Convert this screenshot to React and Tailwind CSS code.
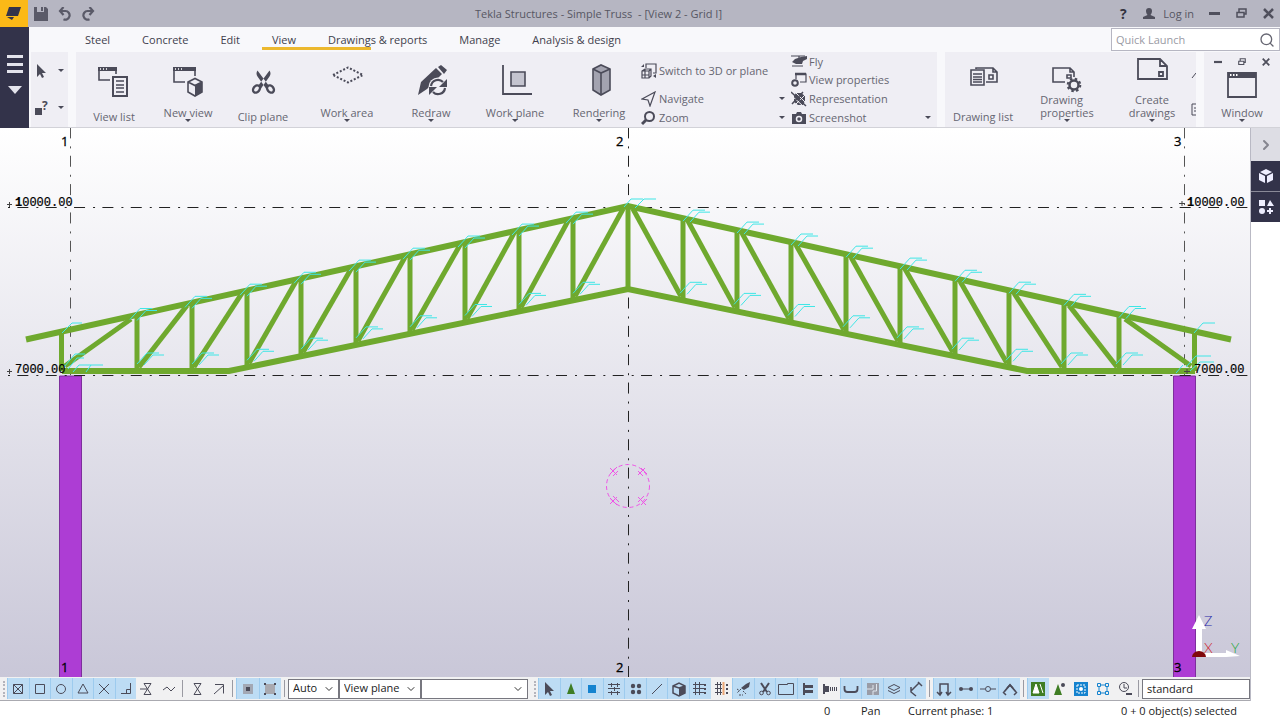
import { Search, ChevronRight, ChevronDown } from 'lucide-react';
import clsx from 'clsx';

const tabs = ['Steel', 'Concrete', 'Edit', 'View', 'Drawings & reports', 'Manage', 'Analysis & design'];

export default function App() {
    return (
        <div className="min-h-screen flex flex-col bg-white text-[11px] text-[#4a4a58] font-['Open_Sans','Noto_Sans',sans-serif]">
            <TitleBar />
            <div className="flex">
                <nav className="w-[29px] shrink-0 bg-[#33334a] flex flex-col items-center">
                    <button aria-label="File menu" className="mt-7">
                        <svg viewBox="0 0 16 40" className="w-4 h-10" fill="#e4e4ec">
                            <path d="M0 0h16v3H0zM0 8h16v3H0zM0 15h16v3H0zM1 31h14l-7 8z" />
                        </svg>
                    </button>
                </nav>
                <div className="flex-1 min-w-0 bg-[#f8f8fb] border-b border-[#d2d2d8]">
                    <Tabs />
                    <Ribbon />
                </div>
            </div>
            <div className="flex">
                <div className="flex-1 min-w-0">
                    <ModelView />
                    <BottomToolbar />
                </div>
                <SidePanel />
            </div>
            <StatusBar />
        </div>
    );
}

function TitleBar() {
    return (
        <header className="h-[27px] flex items-center bg-[#b6b6c2] text-[#565662]">
            <div className="w-[97px] h-full flex items-center">
                <div className="w-[29px] h-full bg-[#fbb917] flex items-center justify-center">
                    <svg viewBox="0 0 16 16" className="w-4 h-4" fill="#33334a">
                        <path d="M3 1h12l-3 9H0zM1 11h7l-2 3z" />
                    </svg>
                </div>
                <button aria-label="Save" className="ml-1.5 w-4">
                    <svg viewBox="0 0 14 14" className="w-[14px] h-[14px]" fill="#5a5a68">
                        <path d="M0 0h3v5h7V0h2l2 2v12H0zM7 0h2v4H7z" />
                    </svg>
                </button>
                <button aria-label="Undo" className="ml-2 w-4">
                    <svg viewBox="0 0 14 14" className="w-[14px] h-[14px]" fill="none" stroke="#5a5a68" strokeWidth="2.2">
                        <path d="M2 4h5.500a4.300 4.300 0 1 1-2 8.200" />
                        <path d="M5.500 0L2 4l3.500 4" />
                    </svg>
                </button>
                <button aria-label="Redo" className="ml-2 w-4">
                    <svg viewBox="0 0 14 14" className="w-[14px] h-[14px]" fill="none" stroke="#5a5a68" strokeWidth="2.2">
                        <path d="M12 4H6.500a4.300 4.300 0 1 0 2 8.200" />
                        <path d="M8.500 0L12 4 8.500 8" />
                    </svg>
                </button>
            </div>
            <h1 className="flex-1 pt-px text-center whitespace-pre">{'Tekla Structures - Simple Truss  - [View 2 - Grid I]'}</h1>
            <div className="w-[180px] h-full flex items-center justify-end">
                <button className="w-4 font-bold text-sm text-[#33333f]">?</button>
                <button className="ml-3 flex items-center gap-2">
                    <svg viewBox="0 0 12 12" className="w-3 h-3" fill="#4f4f5c">
                        <path d="M6 0a3 3 0 0 1 3 3c0 2-1 3-1.5 4L12 9v2H0V9l4.5-2C4 6 3 5 3 3a3 3 0 0 1 3-3z" />
                    </svg>
                    <span className="pt-px">Log in</span>
                </button>
                <div className="flex items-center gap-4 ml-[15px] mr-1.5">
                    <WindowButtons />
                </div>
            </div>
        </header>
    );
}

function WindowButtons({ small }) {
    const size = small ? 'w-2 h-2' : 'w-[11px] h-[11px]';
    return (
        <>
            <button aria-label="Minimize">
                <svg viewBox="0 0 11 11" className={size} fill="#4f4f5c"><path d="M0 4h11v3H0z" /></svg>
            </button>
            <button aria-label="Restore">
                <svg viewBox="0 0 11 11" className={size} fill="none" stroke="#4f4f5c" strokeWidth="1.5">
                    <path d="M3 4V1h7v5H8M1 4.5h7V9H1z" />
                </svg>
            </button>
            <button aria-label="Close">
                <svg viewBox="0 0 11 11" className={size} fill="none" stroke="#4f4f5c" strokeWidth="2.5">
                    <path d="M1 1l9 9M10 1l-9 9" />
                </svg>
            </button>
        </>
    );
}

function Tabs() {
    return (
        <div className="h-[25px] flex items-center justify-between">
            <div className="flex items-center gap-8 pl-14">
                {tabs.map((tab) => (
                    <button key={tab} className="relative h-[25px] pt-0.5 whitespace-nowrap text-[#3f3f4d]">
                        {/* Marker sliding towards the next tab */}
                        {tab === 'View' && <span className="absolute -left-2.5 bottom-0.5 w-[109px] h-[3px] bg-[#ecb82e]" />}
                        {tab}
                    </button>
                ))}
            </div>
            <label className="w-[169px] h-[23px] flex items-center bg-white border border-[#b6b6c2] px-1">
                <input
                    type="text"
                    placeholder="Quick Launch"
                    aria-label="Quick Launch"
                    className="flex-1 min-w-0 pt-px outline-none placeholder:text-[#9a9aa4]"
                />
                <Search className="w-4 h-4 text-[#666672]" />
            </label>
        </div>
    );
}

function Caret() {
    return <svg viewBox="0 0 6 4" className="w-1.5 h-1 shrink-0" fill="#4a4a58"><path d="M0 0h6L3 3z" /></svg>;
}

function BigButton({ label, icon, caret, className }) {
    return (
        <button className={clsx('h-full pt-[5px] pb-1 flex flex-col items-center justify-between', className)}>
            <svg viewBox="0 0 40 36" className="w-10 h-9 overflow-visible" fill="none" stroke="#4b4b59" strokeWidth="1.6">{icon}</svg>
            <span className="flex flex-col items-center">
                <span className="leading-[13px] text-[#666672]">{label}</span>
                {caret && <Caret />}
            </span>
        </button>
    );
}

function SmallButton({ label, icon, caret, className }) {
    return (
        <button className={clsx('flex items-center gap-0.5 pr-1.5 text-[#666672] whitespace-nowrap', className)}>
            <svg viewBox="0 0 16 16" className="w-4 h-4" fill="none" stroke="#4b4b59" strokeWidth="1.2">{icon}</svg>
            <span className="flex-1 pt-px text-left">{label}</span>
            {caret && <Caret />}
        </button>
    );
}

const dark = { fill: '#4b4b59', stroke: 'none' };

const icons = {
    viewList: (
        <>
            <path d="M16 23H5V11h17v6" />
            <path {...dark} d="M4 10h19v4H4z" />
            <path d="M6 12h1M9 12h1M12 12h1" stroke="#fff" />
            <path d="M19 20h14v19H19z" strokeWidth="2" />
            <path d="M22 24h8M22 28h8M22 31h8M22 35h8" />
        </>
    ),
    newView: (
        <>
            <path d="M17 25H6V11h21v8" />
            <path {...dark} d="M5 10h23v4H5z" />
            <path d="M7 12h1M10 12h1M13 12h1" stroke="#fff" />
            <path d="M20 25l7-3.5 7 3.5v10l-7 4-7-4zM20 25l7 3.5 7-3.5" />
            <path {...dark} d="M27 28l7-3v10l-7 4z" />
        </>
    ),
    clip: (
        <>
            <path {...dark} d="M14.500 13.500q-2 3 0 6l8.500 12 3-2.500zM26.500 13.500q2 3 0 6L18 31.500 15 29z" />
            <ellipse cx="13.500" cy="32" rx="3" ry="4" strokeWidth="2.4" transform="rotate(40 13.500 32)" />
            <ellipse cx="27.500" cy="32" rx="3" ry="4" strokeWidth="2.4" transform="rotate(-40 27.500 32)" />
        </>
    ),
    workArea: <path d="M6 18l15-7.5L36 18l-15 7.5z" strokeWidth="2" strokeDasharray="2 1.8" />,
    redraw: (
        <>
            <path {...dark} d="M7 38l3-13L25 11l6 6-15 15zM27 10l3-2 6 5-3 4z" />
            <circle cx="27" cy="30" r="9.5" fill="#efeef4" stroke="none" />
            <path d="M20 29a7 7 0 0 1 12-4M34 31a7 7 0 0 1-12 4" strokeWidth="2.2" />
            <path {...dark} d="M36 22v8h-8zM18 38v-8h8z" />
        </>
    ),
    workPlane: (
        <>
            <path d="M8 8v29h29" strokeWidth="1.8" />
            <path d="M16 15h14v14H16z" fill="#c4c4cf" />
        </>
    ),
    rendering: (
        <>
            <path d="M14 12l8-4 9 4v21l-9 5-8-5z" fill="#a3a3b0" />
            <path d="M14 12l8 4 9-4M22 16v22" />
        </>
    ),
    drawingList: (
        <>
            <path d="M13 12v-1h17l4 4v10H23M30 11v4h4M26 18h4v4h-4z" />
            <path d="M8 13h13v15H8zM10 17h9M10 20h9M10 22.5h9M10 25h9" />
        </>
    ),
    drawingProperties: (
        <>
            <path d="M18 25H6V11h17l4 4v5M23 11v4h4M20 18h4v3h-4z" />
            <circle cx="27" cy="28" r="4.5" strokeWidth="2.5" />
            <circle cx="27" cy="28" r="6.3" strokeWidth="2" strokeDasharray="2.5 2.45" />
        </>
    ),
    createDrawings: <path d="M6 2h22l7 7v13H6zM28 2v7h7M27 15h4v4h-4z" strokeWidth="1.8" />,
    switch3d: (
        <>
            <path d="M5 5V1h10v9h-3" />
            <path d="M1 8l3-2h6v7l-2 2H1zM1 8h7v7M8 8l2-2M1 12h7M4 6v9" />
            <path {...dark} d="M0 4l3-3v3zM15 11v4l-3-2z" />
        </>
    ),
    navigate: <path d="M1 8L14 1 9 15 7 9z" />,
    zoom: (
        <>
            <circle cx="8.5" cy="6.5" r="4.5" strokeWidth="2" />
            <path d="M5 10l-4 4" strokeWidth="3" />
        </>
    ),
    fly: (
        <>
            <path d="M0 3h14M1 13h11M8 3v2" />
            <path {...dark} d="M4 6l6-2 6-1v3l-4 2-1 3H5L1 9z" />
        </>
    ),
    viewProperties: (
        <>
            <path d="M5 7V2h10v8H9" />
            <path d="M4 2h11" strokeWidth="2.5" />
            <circle cx="4" cy="11" r="2.8" strokeWidth="2" />
        </>
    ),
    representation: (
        <>
            <path {...dark} d="M5 2h5l4 3v5l-2 4H7l-4-3V5z" />
            <path d="M1 5l11 10M4 1l11 11M14 4L4 14" stroke="#efeef4" strokeWidth="1" />
            <path d="M0 1l15 14M12 1L1 13" strokeWidth="1.5" />
        </>
    ),
    screenshot: (
        <>
            <path {...dark} d="M1 4h4l1-2h4l1 2h4v10H1z" />
            <circle cx="8" cy="9" r="2.5" stroke="#efeef4" strokeWidth="1.5" />
        </>
    ),
};

function Ribbon() {
    return (
        <div className="h-[75px] flex gap-2 pl-0.5">
            <div className="w-[37px] bg-[#efeef4] flex flex-col justify-around">
                <button aria-label="Select" className="flex items-center justify-between pl-1 pr-1">
                    <svg viewBox="0 0 14 16" className="w-[14px] h-4" fill="#4b4b59"><path d="M2 1l9 9H7l2 4-2 1-2-4-3 3z" /></svg>
                    <Caret />
                </button>
                <button aria-label="Inquire" className="flex items-center justify-between pl-1 pr-1">
                    <svg viewBox="0 0 14 16" className="w-[14px] h-4 overflow-visible">
                        <path d="M0 8h7v7H0z" fill="#4b4b59" />
                        <text x="7" y="10" fontSize="12" fontWeight="700" fill="#4b4b59">?</text>
                    </svg>
                    <Caret />
                </button>
            </div>

            {/* View tools */}
            <div className="flex-1 bg-[#efeef4] flex">
                <BigButton className="w-[76px]" label="View list" icon={icons.viewList} />
                <BigButton className="w-18" label="New view" icon={icons.newView} caret />
                <BigButton className="w-[78px] mr-[3px]" label="Clip plane" icon={icons.clip} />
                <BigButton className="w-21" label="Work area" icon={icons.workArea} caret />
                <BigButton className="w-21" label="Redraw" icon={icons.redraw} caret />
                <BigButton className="w-21" label="Work plane" icon={icons.workPlane} caret />
                <BigButton className="w-21" label="Rendering" icon={icons.rendering} caret />
                <div className="w-[150px] grid grid-rows-4">
                    <SmallButton className="row-span-2" label="Switch to 3D or plane" icon={icons.switch3d} />
                    <SmallButton label="Navigate" icon={icons.navigate} caret />
                    <SmallButton label="Zoom" icon={icons.zoom} caret />
                </div>
                <div className="flex-1 grid grid-rows-4">
                    <SmallButton label="Fly" icon={icons.fly} />
                    <SmallButton label="View properties" icon={icons.viewProperties} />
                    <SmallButton label="Representation" icon={icons.representation} />
                    <SmallButton label="Screenshot" icon={icons.screenshot} caret />
                </div>
            </div>

            {/* Drawings */}
            <div className="w-[251px] bg-[#efeef4] flex">
                <BigButton className="w-[76px]" label="Drawing list" icon={icons.drawingList} />
                <BigButton className="w-[92px] text-left" label={<>Drawing<br />properties</>} icon={icons.drawingProperties} caret />
                <BigButton className="w-[78px]" label={<>Create<br />drawings</>} icon={icons.createDrawings} caret />
                <svg viewBox="0 0 5 75" className="w-[5px] h-[75px]" fill="none" stroke="#4b4b59">
                    <path d="M1 26l4-5M5 52H1v11h4M3 56h2M3 59h2" />
                </svg>
            </div>

            <div className="w-[76px] bg-[#efeef4] flex flex-col items-center justify-between pb-1">
                <div className="h-5 flex items-center gap-4">
                    <WindowButtons small />
                </div>
                <button className="flex flex-col items-center gap-2">
                    <svg viewBox="0 0 30 26" className="w-[30px] h-[26px]" fill="none" stroke="#4b4b59" strokeWidth="1.8">
                        <path d="M1 1h28v24H1z" />
                        <path {...dark} d="M1 1h28v5H1z" />
                        <path d="M3 3h1.5M6 3h1.5M9 3h1.5" stroke="#fff" />
                    </svg>
                    <span className="flex flex-col items-center">
                        <span className="leading-[13px] text-[#666672]">Window</span>
                        <Caret />
                    </span>
                </button>
            </div>
        </div>
    );
}

// Model coordinates: the drawing area starts at y = 128
const MID = 628;
const posts = [55, 109, 163, 218, 272, 327, 381, 436, 491];
const topY = (d) => 206 + d * 0.221;
const bottomY = (d) => Math.min(371, 289 + d * 0.2055);

// Web members of one half, d = distance from the ridge
const diagonals = posts.map((d, i) => {
    const prev = i === 0 ? 0 : posts[i - 1];
    return { top: prev + 5, bottom: d - 2, y1: topY(prev) + 3, y2: bottomY(d) - 4 };
});
diagonals.push({ top: 497, bottom: 563, y1: 319, y2: 366 });

function Weld({ x, y }) {
    return <path d={`M${x} ${y}l10 -11h12M${x + 7} ${y + 1}l9 -10h11`} />;
}

function ModelView() {
    return (
        <svg viewBox="0 128 1250 549" className="block w-full h-auto" role="img" aria-label="Truss model view">
            <defs>
                <linearGradient id="sky" x1="0" y1="0" x2="0" y2="1">
                    <stop offset="0" stopColor="#ffffff" />
                    <stop offset="1" stopColor="#c9c7d8" />
                </linearGradient>
            </defs>
            <rect x="0" y="128" width="1250" height="549" fill="url(#sky)" />

            {/* Columns */}
            <g fill="#ad3dd4" stroke="#7d2f9c">
                <path d="M59.5 376h22v302h-22zM1173.5 376h22v302h-22z" />
            </g>

            {/* Grid lines */}
            <g stroke="#222" strokeDasharray="11 8 2 7.35">
                <path d="M7 207.5H1250M7 375.5H1250" strokeDashoffset="18" />
                <path d="M628.5 127.4V677" />
                <path d="M70.5 127.4V376M1184.5 127.4V376" stroke="#555" />
            </g>

            {/* Truss */}
            <g stroke="#6fa92e" fill="none">
                <path d="M26 339.5L628 206l603 133.5M62 371h167l399-82 399 82h168" strokeWidth="6" />
                <path d="M628 206v83" strokeWidth="5" />
                {[-1, 1].map((s) => (
                    <g key={s} strokeWidth="5">
                        {posts.map((d) => (
                            <path key={d} d={`M${MID + s * d} ${topY(d)}V${bottomY(d)}`} />
                        ))}
                        {diagonals.map((g) => (
                            <path key={g.top} d={`M${MID + s * g.top} ${g.y1}L${MID + s * g.bottom} ${g.y2}`} />
                        ))}
                        <path d={`M${MID + s * 566.5} 331V371`} />
                    </g>
                ))}
            </g>

            {/* Weld marks */}
            <g stroke="#3fe6e6" fill="none">
                {posts.map((d) => (
                    <g key={d}>
                        <Weld x={MID - d - 7} y={topY(d) + 5} />
                        <Weld x={MID + d} y={topY(d) + 3} />
                        <Weld x={MID - d} y={bottomY(d) - 7} />
                        <Weld x={MID + d - 3} y={bottomY(d) - 7} />
                    </g>
                ))}
                <path d="M624 207l7-8h12M635 208l9-9h12" />
                <path d="M62 333l10-10h10M1194 333l9-10h12" />
                <path d="M64 367l11-13h10M68 369l9-11h7M73 372l6-7h24M86 372l5-7" />
                <path d="M1186 367l10-11h15M1190 371l10-9h14M1176 373l7-8" />
            </g>

            {/* Rotation centre */}
            <g stroke="#ee55e6" fill="none">
                <circle cx="628" cy="486" r="21.5" strokeDasharray="4 3" />
                <path d="M610 474l7-7M613 476l5-5M610 468l7 7" />
                <path d="M638 471l5 5M641 468l6 6M638 475l7-7" />
                <path d="M610 498l7 7M613 496l6 6M610 504l7-7" />
                <path d="M638 502l6-6M641 505l6-6M638 497l8 8" />
            </g>

            {/* Grid labels */}
            <g fill="#000" stroke="#000" strokeWidth="0.3" fontSize="13">
                <text x="61" y="146">1</text>
                <text x="616" y="146">2</text>
                <text x="1174" y="146">3</text>
                <text x="61" y="672">1</text>
                <text x="616" y="672">2</text>
                <text x="1174" y="672">3</text>
            </g>
            <g fill="#000" stroke="#000" strokeWidth="0.2" fontSize="12" className="font-['Liberation_Mono',monospace]">
                <text x="15" y="206"><tspan fontWeight="700">1</tspan>0000.00</text>
                <text x="15" y="373">7000.00</text>
                <text x="1187" y="206"><tspan fontWeight="700">1</tspan>0000.00</text>
                <text x="1194" y="373">7000.00</text>
                <path d="M7 204.5h5M9.5 202v5M7 371.5h5M9.5 369v5M1179 203.5h6M1182 201v5M1184 371.5h6M1187 369v5" stroke="#444" strokeWidth="1" />
            </g>

            {/* Axes */}
            <path d="M1196 655V629h-4l7-14 7 14h-4v24h24v-3l14 6-14 1h-20z" fill="#fff" />
            <path d="M1192 657a7 6 0 0 1 14 0z" fill="#80080c" />
            <g fontSize="14" className="font-['Lato',sans-serif] font-light">
                <text x="1204" y="626" fill="#2a2aa8">Z</text>
                <text x="1204" y="653" fill="#d0202a">X</text>
                <text x="1231" y="653" fill="#28a83c">Y</text>
            </g>
        </svg>
    );
}

function SidePanel() {
    return (
        <aside className="w-[30px] shrink-0 flex flex-col border-l border-[#b9b9c4] bg-white">
            <button aria-label="Collapse panel" className="h-[33px] flex items-center justify-center bg-[#dddde4]">
                <ChevronRight className="w-4 h-4 text-[#85858f]" strokeWidth={3} />
            </button>
            <button aria-label="Components" className="h-[30px] flex items-center justify-center bg-[#33334a]">
                <svg viewBox="0 0 16 16" className="w-4 h-4" fill="#eef"><path d="M8 1l6 3-6 3-6-3zM1 5l6 3v7l-6-3zM15 5L9 8v7l6-3z" /></svg>
            </button>
            <button aria-label="Applications" className="h-[31px] flex items-center justify-center border-t border-[#8a8a98] bg-[#33334a]">
                <svg viewBox="0 0 16 16" className="w-4 h-4" fill="#eef">
                    <path d="M1 1h6v6H1zM12 1l4 6H9zM11 9h2v2h2v2h-2v2h-2v-2H9v-2h2z" />
                    <circle cx="4" cy="12" r="3" />
                </svg>
            </button>
        </aside>
    );
}

const blue = { fill: '#1583cf', stroke: 'none' };
const green = { fill: '#3f7d24', stroke: 'none' };

// Snap switches
const snaps = [
    { name: 'Snap to points', on: true, d: <path d="M3.5 3.5h9v9h-9zM3.5 3.5l9 9M12.5 3.5l-9 9" /> },
    { name: 'Snap to end points', on: true, d: <path d="M3.5 3.5h9v9h-9z" /> },
    { name: 'Snap to centers', on: true, d: <circle cx="8" cy="8" r="4.5" /> },
    { name: 'Snap to midpoints', on: true, d: <path d="M8 3l5 9H3z" /> },
    { name: 'Snap to intersections', on: true, d: <path d="M3 3l10 10M13 3L3 13" /> },
    { name: 'Snap to perpendiculars', on: true, d: <path d="M12.5 2v10.5H3M8.5 12V8.5H12" /> },
    { name: 'Snap to extensions', d: <path d="M5 2.5h7L5 13.5h7L5 2.5M1 8h7" /> },
    { name: 'Snap to any position', d: <path d="M2 9l4-3 4 4 4-4" /> },
];
const snapLines = [
    { name: 'Snap to nearest', d: <path d="M5 2.5h7L5 13.5h7z" /> },
    { name: 'Snap to lines', d: <path d="M3 13l10-9M4 3.5h8.5v9" /> },
];
const snapModes = [
    { name: 'Snap to reference lines', on: true, d: <><path d="M3 3h10v10H3z" fill="#a3a8b4" stroke="none" /><path {...dark} d="M6 6h4v4H6z" /></> },
    { name: 'Snap to geometry', on: true, d: <><path d="M3 3h10v10H3z" fill="#a9a9b0" stroke="none" /><path {...dark} d="M2 2h2v2H2zM12 2h2v2h-2zM2 12h2v2H2zM12 12h2v2h-2z" /></> },
];

// Selection switches
const selections = [
    { name: 'Select all', on: true, d: <path {...dark} d="M4 1l9 9H9l2 4-2 1-2-4-3 3z" /> },
    { name: 'Select connections', on: true, d: <path {...green} d="M8 2l4 11H4z" /> },
    { name: 'Select parts', on: true, d: <path {...blue} d="M4 4h8v8H4z" /> },
    { name: 'Select surface treatment', on: true, d: <path d="M2 3.5h12M2 7.5h12M2 11.5h12M5.5 2v4M11.5 2v4M8.5 6v4M5.5 10v4M11.5 10v4" /> },
    { name: 'Select points', on: true, d: <g {...dark}><circle cx="5" cy="5" r="2.2" /><circle cx="11" cy="5" r="2.2" /><circle cx="5" cy="11" r="2.2" /><circle cx="11" cy="11" r="2.2" /></g> },
    { name: 'Select lines', on: true, d: <path d="M3 13L13 3" /> },
    { name: 'Select objects in view', on: true, d: <><path d="M2 5l6-3 6 3v7l-6 3-6-3zM2 5l6 2 6-2" strokeWidth="1.5" /><path {...dark} d="M8 7l6-2v7l-6 3z" /></> },
    { name: 'Select grid', on: true, d: <><path d="M1 3.5h11M1 7.5h11M1 11.5h11M3.5 1v13M7.5 1v13" /><path d="M13 3v11" strokeDasharray="2 2" strokeWidth="2" /></> },
    { name: 'Select grid lines', d: <><path d="M1 3.5h7M1 7.5h7M1 11.5h7M3.5 1v13M6.5 1v13" /><path d="M9.5 1v13" stroke="#eba878" strokeWidth="2" /><path d="M13 3v11" strokeDasharray="2 2" strokeWidth="2" /></> },
    { name: 'Select welds', on: true, d: <><path {...dark} d="M6 7l5-4 4-2-1 5-5 3z" /><path d="M6 8l-4 4M2 8l3 2M4 14h4M8 10l3 3" strokeDasharray="2 1" /></> },
    { name: 'Select cuts', on: true, d: <><path d="M4 2l6 9M12 2L6 11" strokeWidth="2" /><circle cx="4.5" cy="12" r="1.8" /><circle cx="11.5" cy="12" r="1.8" /></> },
    { name: 'Select views', on: true, d: <path d="M.5 3.5h9v-1h6v11H.5z" /> },
    { name: 'Select bolts', on: true, d: <path {...dark} d="M3 2h2v2h8v3H5v2h8v3H5v2H3z" /> },
    { name: 'Select single bolts', d: <><path {...dark} d="M1 3h2v2h4v6H3v2H1z" /><path d="M8.5 6v4M10.5 6v4M12.5 6v4M14.5 6v4" /></> },
    { name: 'Select reinforcement', on: true, d: <path d="M1.5 5v3q0 3 3 3h7q3 0 3-3V5" strokeWidth="1.8" /> },
    { name: 'Select pours', on: true, d: <><path d="M2 2h12v12H2z" fill="#9a9ca6" stroke="none" /><path d="M11.5 3v7H8v4M2 8h6V4" stroke="#dfe6ee" /></> },
    { name: 'Select planes', on: true, d: <path d="M2 6.5l6-3 6 3-6 3zM2 9.5l6 3 6-3" /> },
    { name: 'Select distances', on: true, d: <path d="M3 10l8-8M3 6v5l5 4M10 1l4 4" strokeWidth="1.5" /> },
];
const components = [
    { name: 'Select components', on: true, d: <path d="M4 14V3h8v11M1 11l3 3 2-3M10 11l2 3 3-3" strokeWidth="1.5" /> },
    { name: 'Select objects in components', on: true, d: <><path d="M3 8h10" /><circle {...dark} cx="3" cy="8" r="2" /><circle {...dark} cx="13" cy="8" r="2" /></> },
    { name: 'Select assemblies', on: true, d: <><path d="M0 8h5M11 8h5" /><circle cx="8" cy="8" r="2.5" /></> },
    { name: 'Select objects in assemblies', on: true, d: <><path d="M2 11l6-7 6 7" strokeWidth="1.8" /><path d="M1 11l3 3M15 11l-3 3M5 7l3-3 3 3" strokeWidth="1.5" /></> },
];
const drawingSwitches = [
    { name: 'Select tasks', on: true, d: <><path {...green} d="M1 1h14v14H1z" /><path d="M6 3l3 9H3zM10 3l3 9" fill="#fff" stroke="#fff" /></> },
    { name: 'Direct modification', d: <><path {...green} d="M6 3l4 11H2z" /><circle {...dark} cx="11" cy="4" r="2" /></> },
    { name: 'Drag and drop', d: <><path {...blue} d="M1 1h14v14H1z" /><path d="M4 4h8v8H4z" stroke="#fff" strokeDasharray="2 1" /><circle cx="8" cy="8" r="2" fill="#fff" stroke="none" /></> },
    { name: 'Smart select', d: <><path d="M4 4h8v8H4z" stroke="#1583cf" /><path d="M2.5 2.5h3v3h-3zM10.5 2.5h3v3h-3zM2.5 10.5h3v3h-3zM10.5 10.5h3v3h-3z" fill="#f0f0f0" stroke="#1583cf" /></> },
    { name: 'Work plane handler', d: <><circle cx="7" cy="6" r="4.5" /><path d="M7 3v4h3" /><path d="M9 13h6" strokeWidth="2" /></> },
];

function SwitchGroup({ items, className }) {
    return (
        <div className={clsx('flex h-[21px]', className)}>
            {items.map((item) => (
                <button
                    key={item.name}
                    aria-label={item.name}
                    aria-pressed={!!item.on}
                    className={clsx('flex-1 min-w-0 flex items-center justify-center border-l', item.on ? 'bg-[#bddcf4] border-[#9dcbee]' : 'border-transparent')}
                >
                    <svg viewBox="0 0 16 16" className="w-4 h-4 shrink-0" fill="none" stroke="#4b4b59">{item.d}</svg>
                </button>
            ))}
        </div>
    );
}

function Separator() {
    return <span className="w-px h-[17px] mx-[3px] bg-[#9a9aa2]" />;
}

function Grip() {
    return <span className="h-4 ml-[3px] mr-0.5 border-l-2 border-dotted border-[#b4b4bc]" />;
}

function Dropdown({ label, value, className }) {
    return (
        <div className={clsx('relative h-5', className)}>
            <select aria-label={label} defaultValue={value} className="w-full h-full pl-1 appearance-none bg-white border border-[#77777f] text-[#222] outline-none">
                <option>{value}</option>
            </select>
            <ChevronDown className="absolute right-1 top-1 w-3 h-3 text-[#333] pointer-events-none" />
        </div>
    );
}

function BottomToolbar() {
    return (
        <div className="h-6 flex items-center bg-[#f1f1f2] border-b border-[#aaaab0] overflow-hidden">
            <Grip />
            <SwitchGroup items={snaps} className="w-[172px]" />
            <Separator />
            <SwitchGroup items={snapLines} className="w-[43px]" />
            <Separator />
            <SwitchGroup items={snapModes} className="w-[45px]" />
            <Separator />
            <Dropdown label="Snap depth" value="Auto" className="w-[51px]" />
            <Dropdown label="Plane type" value="View plane" className="w-[82px]" />
            <Dropdown label="Plane name" value="" className="w-[107px]" />
            <span className="w-[3px]" />
            <Grip />
            <SwitchGroup items={selections} className="w-[388px]" />
            <Separator />
            <SwitchGroup items={components} className="w-[87px]" />
            <Separator />
            <SwitchGroup items={drawingSwitches} className="w-[108px]" />
            <Separator />
            <input type="text" aria-label="Selection filter" defaultValue="standard" className="flex-1 min-w-0 h-5 px-1 bg-white border border-[#77777f] text-[#222] outline-none" />
        </div>
    );
}

function StatusBar() {
    return (
        <footer className="h-[19px] pt-0.5 flex items-center justify-end bg-white text-[#222] whitespace-nowrap">
            <span className="w-[37px]">0</span>
            <span className="w-[47px]">Pan</span>
            <span className="w-[213px]">Current phase: 1</span>
            <span className="w-[159px]">0 + 0 object(s) selected</span>
        </footer>
    );
}
